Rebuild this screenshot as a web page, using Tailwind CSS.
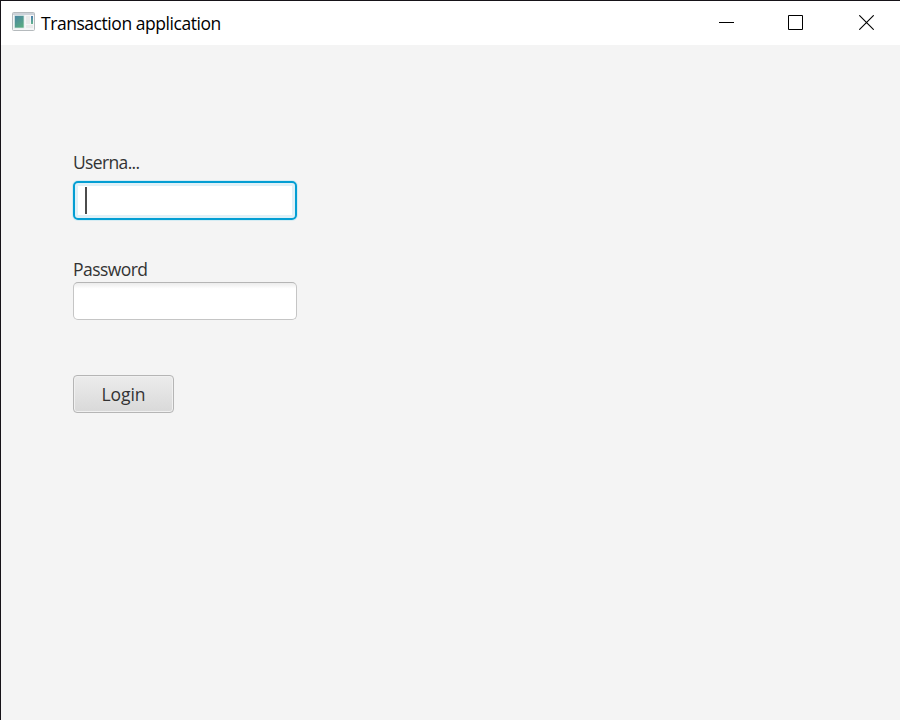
<!DOCTYPE html>
<html lang="en">
<head>
<meta charset="utf-8">
<title>Transaction application</title>
<script src="https://cdn.jsdelivr.net/npm/@tailwindcss/browser@4"></script>
</head>
<body class="w-[900px] h-[720px] overflow-hidden bg-[#f4f4f4] font-['Open_Sans','Noto_Sans',sans-serif]">
<div class="flex flex-col w-full h-full border-l border-t border-[#161318]">
  <header class="flex items-center justify-between h-[44px] shrink-0 bg-white pl-[11px]">
    <div class="flex items-center h-full">
      <svg class="w-[23px] h-[19px] mb-[3px]" viewBox="0 0 23 19">
        <defs>
          <linearGradient id="g" x1="0" y1="0" x2="0.6" y2="1"><stop offset="0" stop-color="#4b84a5"/><stop offset="1" stop-color="#58aa82"/></linearGradient>
          <linearGradient id="h" x1="0" y1="0" x2="0" y2="1"><stop offset="0" stop-color="#4b7fae"/><stop offset="1" stop-color="#63b58c"/></linearGradient>
        </defs>
        <rect x=".5" y=".5" width="22" height="18" rx="1" fill="#f5f6f7" stroke="#b5babd"/>
        <rect x="1" y="1" width="21" height="2" fill="#cdd2d9"/>
        <rect x="2.5" y="3.5" width="9.5" height="12.5" fill="url(#g)" stroke="#dce8e6" stroke-width=".7"/>
        <rect x="14" y="4" width="4" height="8" fill="#e9eaea"/>
        <rect x="14" y="13" width="7" height="3" fill="#e9eaea"/>
        <rect x="19" y="4" width="2" height="8" fill="url(#h)"/>
      </svg>
      <span class="ml-[6px] text-[17.5px] leading-[24px] tracking-[-0.45px] text-black whitespace-nowrap">Transaction application</span>
    </div>
    <div class="flex h-full items-center pr-[26px] gap-[54px]">
      <svg class="w-[15px] h-[15px] mb-[1px]" viewBox="0 0 15 15"><path d="M0 7.5h15" stroke="#000"/></svg>
      <svg class="w-[15px] h-[15px] mb-[1px]" viewBox="0 0 15 15"><path d="M.5.5h14v14H.5z" fill="none" stroke="#000"/></svg>
      <svg class="w-[15px] h-[15px] mb-[1px] ml-[2px]" viewBox="0 0 15 15"><path d="M.3.3l14.4 14.4M14.7.3L.3 14.7" stroke="#000" stroke-width="1.1"/></svg>
    </div>
  </header>
  <main class="flex flex-col items-start pl-[72px] pt-[105px] text-[17.5px] leading-[24px] text-[#333]">
    <label class="h-[24px] tracking-[-0.65px]">Userna...</label>
    <div class="mt-[7px] flex items-center w-[224px] h-[39px] pl-[10px] rounded-[5px] bg-white border-2 border-[#039ed3] shadow-[0_0_0_1px_#d5ecf3,inset_0_0_0_3px_#dff1f8]">
      <span class="w-[2px] h-[27px] bg-[#4c4c4c]"></span>
    </div>
    <label class="mt-[37px] h-[24px] tracking-[-0.55px]">Password</label>
    <div class="mt-[1px] w-[224px] h-[38px] rounded-[5px] bg-linear-to-b from-[#ececec] via-white via-[16%] to-white border border-[#c5c5c5] border-t-[#b5b5b5]"></div>
    <button class="mt-[55px] w-[101px] h-[38px] rounded-[4px] bg-linear-to-b from-[#ececec] to-[#d9d9d9] border border-[#b5b5b5] shadow-[inset_0_0_0_1px_#f0f0f0] tracking-[-0.1px]">Login</button>
  </main>
</div>
</body>
</html>
